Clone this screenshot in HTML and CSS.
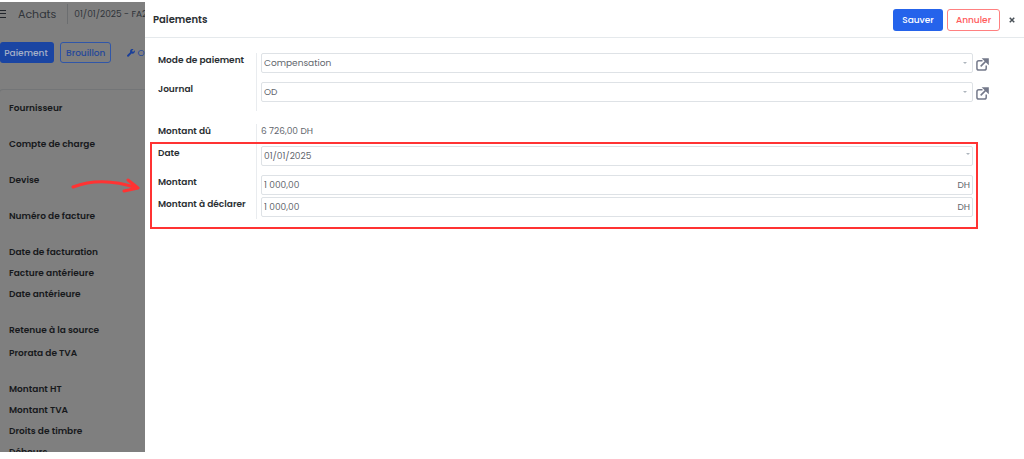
FILE: index.html
```html
<!DOCTYPE html>
<html lang="fr">
<head>
    <meta charset="UTF-8">
    <meta name="viewport" content="width=device-width, initial-scale=1.0">
    <title>Paiements</title>
    <link rel="stylesheet" href="styles.css">
</head>
<body>
    <div class="app">
        <!-- INVOICE PAGE (dimmed) -->
        <main class="invoice">
            <header class="topbar">
                <button class="menu" aria-label="Menu"><span></span></button>
                <h1>Achats</h1>
                <span class="crumb">01/01/2025 - FA2025</span>
            </header>
            <div class="actions">
                <button class="btn primary">Paiement</button>
                <button class="btn outline">Brouillon</button>
                <a class="tools" href="#">
                    <svg viewBox="0 0 512 512" aria-hidden="true"><path d="M508 110c-3-12-18-16-27-7l-74 74-68-11-11-68 74-74c9-9 5-24-7-27-53-13-111 1-152 42-44 44-57 108-40 164L19 387a64 64 0 0 0 90 90l184-184c56 18 120 6 165-39 41-41 55-99 50-144z"/></svg>
                    Outils
                </a>
            </div>
            <section class="card">
                <div class="line tall">Fournisseur</div>
                <div class="line tall">Compte de charge</div>
                <div class="line tall">Devise</div>
                <div class="line tall">Numéro de facture</div>
                <div class="line">Date de facturation</div>
                <div class="line">Facture antérieure</div>
                <div class="line tall">Date antérieure</div>
                <div class="line mid">Retenue à la source</div>
                <div class="line tall">Prorata de TVA</div>
                <div class="line">Montant HT</div>
                <div class="line">Montant TVA</div>
                <div class="line">Droits de timbre</div>
                <div class="line">Débours</div>
            </section>
            <svg class="arrow" viewBox="0 0 72 20" aria-hidden="true"><path d="M4 12C22 5 45 5 68 13M59 5l10 8-14 3"/></svg>
        </main>

        <!-- PAYMENT PANEL -->
        <form class="panel">
            <header class="panel-header">
                <h2>Paiements</h2>
                <button type="submit" class="btn primary">Sauver</button>
                <button type="button" class="btn danger">Annuler</button>
                <button type="button" class="close" aria-label="Fermer"><svg viewBox="0 0 8 8"><path d="M1 1l6 6M7 1L1 7"/></svg></button>
            </header>
            <div class="panel-body">
                <div class="group">
                    <div class="row">
                        <label for="mode">Mode de paiement</label>
                        <div class="value caret">
                            <select id="mode"><option>Compensation</option></select>
                        </div>
                        <a class="external" href="#" aria-label="Ouvrir le mode de paiement">
                            <svg viewBox="0 0 14 14"><path d="M7 3H3Q1 3 1 5v6q0 2 2 2h6q2 0 2-2V8M5 9l7-7"/><path class="tip" d="M8 1h5v5z"/></svg>
                        </a>
                    </div>
                    <div class="row">
                        <label for="journal">Journal</label>
                        <div class="value caret">
                            <select id="journal"><option>OD</option></select>
                        </div>
                        <a class="external" href="#" aria-label="Ouvrir le journal">
                            <svg viewBox="0 0 14 14"><path d="M7 3H3Q1 3 1 5v6q0 2 2 2h6q2 0 2-2V8M5 9l7-7"/><path class="tip" d="M8 1h5v5z"/></svg>
                        </a>
                    </div>
                </div>
                <div class="group">
                    <div class="row short">
                        <label for="due">Montant dû</label>
                        <div class="value"><output id="due">6 726,00 DH</output></div>
                    </div>
                    <div class="highlight">
                        <div class="row">
                            <label for="date">Date</label>
                            <div class="value caret date">
                                <input type="text" id="date" value="01/01/2025">
                            </div>
                        </div>
                        <div class="row short">
                            <label for="amount">Montant</label>
                            <div class="value">
                                <input type="text" id="amount" value="1 000,00">
                                <span class="unit">DH</span>
                            </div>
                        </div>
                        <div class="row short">
                            <label for="declared">Montant à déclarer</label>
                            <div class="value">
                                <input type="text" id="declared" value="1 000,00">
                                <span class="unit">DH</span>
                            </div>
                        </div>
                    </div>
                </div>
            </div>
        </form>
    </div>
</body>
</html>
```
FILE: styles.css
```css
* {
    box-sizing: border-box;
}
body {
    margin: 0;
    padding: 2px 0 7px;
    height: 100vh;
    background-color: white;
    font-family: Poppins, Inter, "Open Sans", sans-serif;
    font-size: 9px;
    line-height: 14px;
    color: #2b2f33;
}
.app {
    display: grid;
    grid-template-columns: 145px 1fr;
    height: 100%;
}
h1, h2 {
    margin: 0;
}
button, input, select {
    font: inherit;
    color: inherit;
}
button {
    cursor: pointer;
}

/* buttons */
.btn {
    height: 21px;
    padding: 0 5px;
    border: 1px solid transparent;
    border-radius: 3px;
    background-color: transparent;
    font-weight: 500;
    white-space: nowrap;
}
.primary {
    background-color: #2563eb;
    color: white;
}
.outline {
    border-color: #3056a8;
    color: #26489a;
}
.danger {
    border-color: #ff8080;
    color: #ff5c5c;
}

/* invoice page */
.invoice {
    position: relative;
    overflow: hidden;
    background-color: #7f7f7f;
    color: #17191c;
}
.topbar {
    display: flex;
    align-items: center;
    height: 23px;
    white-space: nowrap;
    color: #30343a;
}
.menu {
    flex: none;
    width: 6px;
    height: 8px;
    margin-right: 12px;
    padding: 0;
    border: solid #22262c;
    border-width: 1px 0;
    background-color: transparent;
}
.menu span {
    display: block;
    height: 1px;
    background-color: #22262c;
}
.topbar h1 {
    font-size: 11px;
    font-weight: 400;
}
.crumb {
    margin-left: 11px;
    padding: 3px 0 3px 6px;
    border-left: 1px solid #6c6e70;
}
.actions {
    display: flex;
    align-items: center;
    gap: 6px;
    margin-top: 17px;
}
.actions .btn {
    flex: none;
}
.actions .primary {
    width: 54px;
    padding: 0 2px 0 0;
    border-radius: 3px;
    background-color: #1a45a3;
    color: #a5b0c8;
}
.tools {
    display: flex;
    align-items: center;
    gap: 2px;
    margin-left: 10px;
    color: #26489a;
    text-decoration: none;
}
.tools svg {
    flex: none;
    width: 8px;
    height: 8px;
    fill: #1a3f9a;
}
.card {
    margin: 26px 0 0 -1px;
    padding: 11px 9px;
    border: 1px solid #737577;
    border-right: 0;
    border-radius: 4px 0 0 0;
}
.line {
    height: 21px;
    font-weight: 600;
    white-space: nowrap;
}
.line.mid {
    height: 23px;
}
.line.tall {
    height: 36px;
}
.arrow {
    position: absolute;
    top: 173px;
    right: 4px;
    width: 72px;
    height: 20px;
    fill: none;
    stroke: #ff3333;
    stroke-width: 3;
    stroke-linecap: round;
    stroke-linejoin: round;
}

/* payment panel */
.panel-header {
    display: flex;
    align-items: center;
    gap: 4px;
    height: 36px;
    padding: 0 8px;
    border-bottom: 1px solid #e5e9ec;
}
.panel-header h2 {
    margin-right: auto;
    font-size: 10px;
    font-weight: 600;
}
.panel-header .btn {
    width: 50px;
    height: 22px;
    padding: 0;
}
.panel-header .danger {
    width: 53px;
}
.close {
    width: 8px;
    height: 8px;
    margin-left: 4px;
    padding: 1px;
    border: 0;
    background-color: transparent;
}
.close svg {
    display: block;
    width: 100%;
    stroke: #495057;
    stroke-width: 2;
}
.panel-body {
    padding: 15px 35px 15px 13px;
}
.group {
    margin-bottom: 13px;
}
.row {
    display: grid;
    grid-template-columns: 98px 1fr 16px;
    height: 29px;
}
.row.short {
    height: 22px;
}
.row label {
    font-weight: 600;
    white-space: nowrap;
}
.value {
    position: relative;
    padding-left: 4px;
    border-left: 1px solid #e9ecef;
    color: #5f666d;
}
.value input, .value select {
    display: block;
    width: 100%;
    height: 20px;
    padding: 0 2px;
    border: 1px solid #dee2e6;
    border-radius: 2px;
    background-color: white;
    appearance: none;
}
.caret::after {
    content: "";
    position: absolute;
    top: 9px;
    right: 6px;
    border: 2px solid transparent;
    border-top-color: #adb5bd;
}
.caret.date::after {
    top: 7px;
    right: 3px;
}
.unit {
    position: absolute;
    top: 3px;
    right: 3px;
}
.external {
    padding: 5px 0 0 3px;
}
.external svg {
    display: block;
    width: 13px;
    height: 13px;
    fill: none;
    stroke: #74798a;
    stroke-width: 1.6;
}
.external .tip {
    fill: #74798a;
}
.highlight {
    position: relative;
}
.highlight::before {
    content: "";
    position: absolute;
    top: -4px;
    right: 11px;
    bottom: -10px;
    left: -8px;
    border: 2px solid #ff3333;
    pointer-events: none;
}
```
